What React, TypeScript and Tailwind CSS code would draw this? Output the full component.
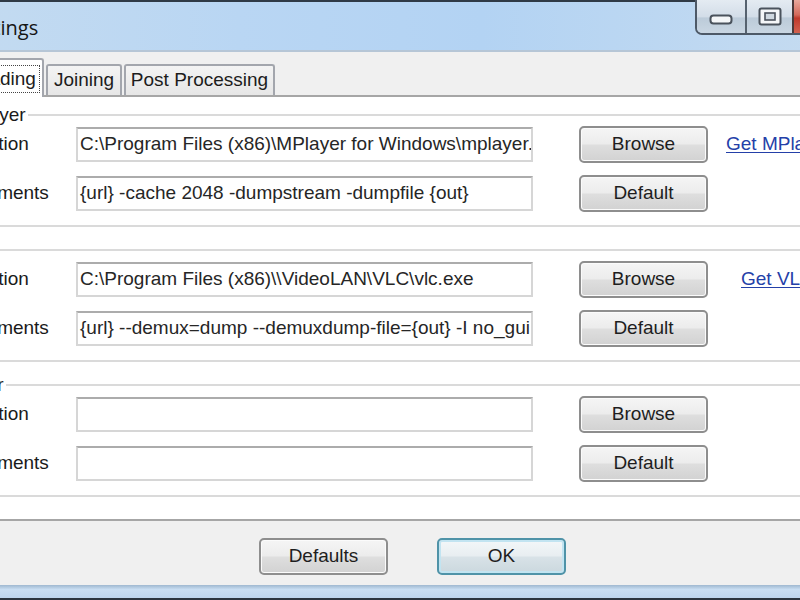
import React from 'react';

// Win7-style settings dialog, cropped: the window is wider than the viewport
// and shifted left, so the left and right edges fall outside the picture.

const btnBase =
  'h-[37px] w-[129px] shrink-0 rounded-[5px] border-2 text-[19px] text-[#1e1e1e] flex items-center justify-center';
const btnGray =
  'border-[#8e8e8e] bg-[linear-gradient(#f5f5f5,#ececec_48%,#dedede_52%,#d2d2d2)] shadow-[inset_0_0_0_1px_#fbfbfb]';

interface RowProps {
  label: string;
  value: string;
  btn: string;
  link?: string;
  linkMl?: string;
}

const Row: React.FC<RowProps> = ({ label, value, btn, link, linkMl }) => (
  <div className="flex items-center h-[37px] pl-[3px]">
    <span className="w-[119px] shrink-0 text-[#1a1a1a]">{label}</span>
    <div className="w-[457px] h-[35px] shrink-0 bg-white border-2 border-[#d6d6d6] border-t-[#acacac] flex items-center pl-[2px] overflow-hidden whitespace-nowrap text-[#262626]">
      {value}
    </div>
    <button className={`${btnBase} ${btnGray} ml-[46px]`}>{btn}</button>
    {link && (
      <a className={`${linkMl} text-[#2440a8] underline underline-offset-2 whitespace-nowrap`}>{link}</a>
    )}
  </div>
);

interface GroupProps {
  title: string;
  rows: RowProps[];
}

const Group: React.FC<GroupProps> = ({ title, rows }) => (
  <fieldset className="border-2 border-[#dadada] rounded-[4px] px-[6px] pb-[13px]">
    <legend className="px-[2px] leading-[22px] text-[#1a1a1a]">{title}</legend>
    <div className="flex flex-col gap-[12px]">
      {rows.map((r) => (
        <Row key={r.label + r.btn} {...r} />
      ))}
    </div>
  </fieldset>
);

export default function App() {
  return (
    <div className="w-[800px] h-[600px] overflow-hidden bg-[#f0f0f0] font-['Liberation_Sans',Arial,sans-serif] text-[19px] text-[#1c1c1c]">
      <div className="w-[970px] -ml-[100px] h-full flex flex-col">
        {/* top frame edge */}
        <div className="h-[2px] shrink-0 bg-[#2f3a46]" />

        {/* title bar */}
        <div className="h-[48px] shrink-0 flex justify-between bg-[linear-gradient(90deg,#c6dcf0,#b9d6f3_35%,#b3d3f3_60%,#c7dcf0)]">
          <span className="pl-[64px] self-center pt-[4px] font-['Open_Sans',sans-serif] text-[20px] text-[#151515]">
            Settings
          </span>
          <div className="flex h-[33px] mr-[6px] -mt-[2px]">
            <div className="flex h-[35px] border-2 border-t-0 border-[#4d5967] rounded-bl-[7px] rounded-br-[7px] overflow-hidden">
              <div className="w-[48px] flex items-center justify-center bg-[linear-gradient(#e4ebf2,#d3dde8_50%,#bccbd9_55%,#c9d6e2)]">
                <svg width="24" height="11" viewBox="0 0 24 11" className="mt-[6px]">
                  <rect x="1.5" y="1.5" width="21" height="8" rx="3" fill="#f4f6f8" stroke="#4a525c" strokeWidth="2" />
                </svg>
              </div>
              <div className="w-[2px] bg-[#56626f]" />
              <div className="w-[45px] flex items-center justify-center bg-[linear-gradient(#e4ebf2,#d3dde8_50%,#bccbd9_55%,#c9d6e2)]">
                <svg width="24" height="19" viewBox="0 0 24 19">
                  <rect x="1.5" y="1.5" width="21" height="16" rx="2" fill="#f4f6f8" stroke="#4a525c" strokeWidth="2" />
                  <rect x="7" y="6" width="10" height="7" fill="#cfd8e0" stroke="#4a525c" strokeWidth="1.6" />
                </svg>
              </div>
              <div className="w-[2px] bg-[#4a3a3a]" />
              <div className="w-[68px] bg-[linear-gradient(#e8a89c,#d4695a_45%,#c0392b_55%,#d2614f)]" />
            </div>
          </div>
        </div>
        <div className="h-[2px] shrink-0 bg-[#b6c6d6]" />

        {/* client area */}
        <div className="flex-1 flex flex-col px-[12px]">
          {/* tab strip */}
          <div className="h-[43px] shrink-0 flex items-end pl-[6px] relative z-10">
            <div className="h-[39px] w-[126px] -mb-[2px] bg-white border-2 border-b-0 border-[#a3a6ad] rounded-t-[3px] flex items-center justify-center">
              <span className="border border-dotted border-[#444] px-[3px] leading-[26px] whitespace-nowrap">
                Downloading
              </span>
            </div>
            <div className="h-[31px] w-[76px] ml-[2px] bg-[linear-gradient(#f4f4f4,#e6e6e6)] border-2 border-b-0 border-[#a3a6ad] rounded-t-[3px] flex items-center justify-center whitespace-nowrap">
              Joining
            </div>
            <div className="h-[31px] w-[151px] ml-[2px] bg-[linear-gradient(#f4f4f4,#e6e6e6)] border-2 border-b-0 border-[#a3a6ad] rounded-t-[3px] flex items-center justify-center whitespace-nowrap">
              Post Processing
            </div>
          </div>

          {/* tab page */}
          <div className="h-[426px] shrink-0 bg-white border-2 border-[#a6a6a6] pl-[32px] pr-[32px] pt-[7px] flex flex-col gap-[12px]">
            <Group
              title="MPlayer"
              rows={[
                {
                  label: 'Location',
                  value: 'C:\\Program Files (x86)\\MPlayer for Windows\\mplayer.exe',
                  btn: 'Browse',
                  link: 'Get MPlayer',
                  linkMl: 'ml-[18px]',
                },
                { label: 'Arguments', value: '{url} -cache 2048 -dumpstream -dumpfile {out}', btn: 'Default' },
              ]}
            />
            <Group
              title="VLC"
              rows={[
                {
                  label: 'Location',
                  value: 'C:\\Program Files (x86)\\\\VideoLAN\\VLC\\vlc.exe',
                  btn: 'Browse',
                  link: 'Get VLC',
                  linkMl: 'ml-[33px]',
                },
                { label: 'Arguments', value: '{url} --demux=dump --demuxdump-file={out} -I no_gui', btn: 'Default' },
              ]}
            />
            <Group
              title="Other"
              rows={[
                { label: 'Location', value: '', btn: 'Browse' },
                { label: 'Arguments', value: '', btn: 'Default' },
              ]}
            />
          </div>

          {/* dialog buttons */}
          <div className="h-[64px] shrink-0 flex items-start pt-[17px] pl-[347px] gap-[49px]">
            <button className={`${btnBase} ${btnGray}`}>Defaults</button>
            <button
              className={`${btnBase} border-[#4f93a8] bg-[linear-gradient(#f3f7f9,#e8eef1_48%,#d8e2e7_52%,#cbd8de)] shadow-[inset_0_0_0_2px_#c2e4f1]`}
            >
              OK
            </button>
          </div>
        </div>

        {/* bottom frame */}
        <div className="h-[13px] shrink-0 bg-[linear-gradient(#9fb8d0,#c9def3_35%,#bdd5ee)]" />
        <div className="h-[2px] shrink-0 bg-[#2b3540]" />
      </div>
    </div>
  );
}
